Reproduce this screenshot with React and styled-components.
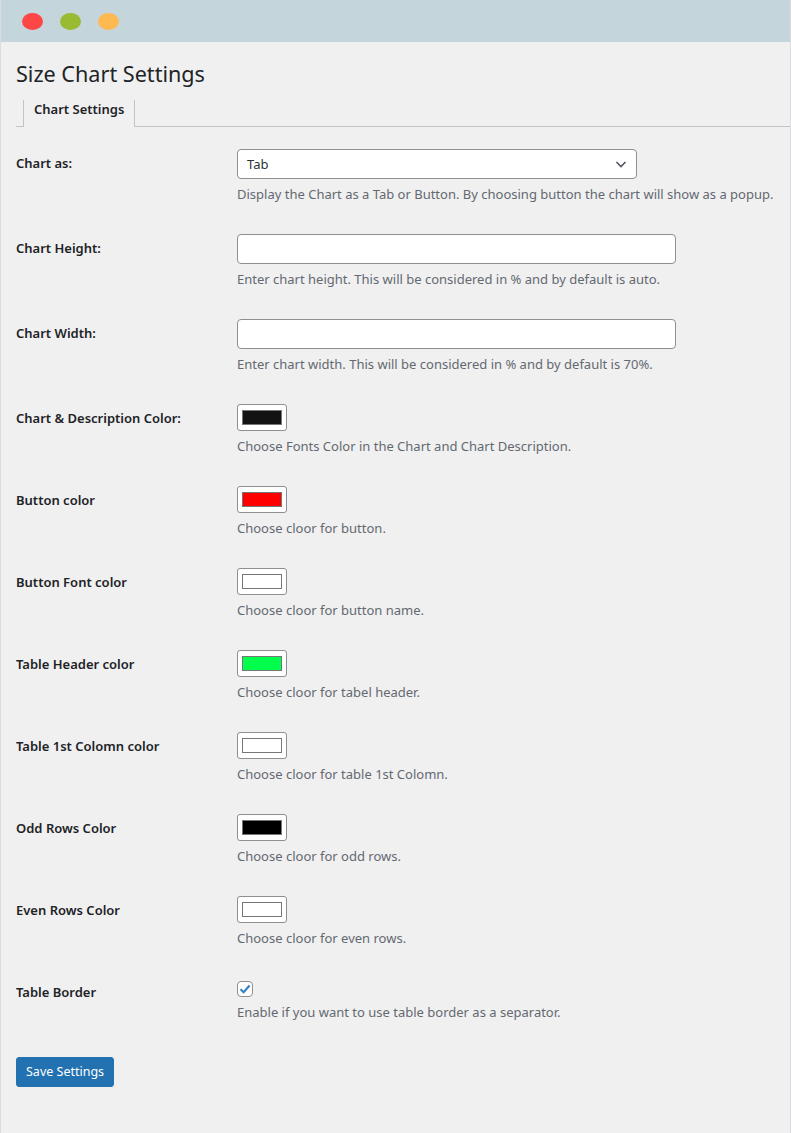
import React from "react";
import styled, { createGlobalStyle } from "styled-components";

const Global = createGlobalStyle`
  html, body { margin: 0; padding: 0; background: #f0f0f0; }
  body { font-family: "Noto Sans", "Open Sans", sans-serif; font-size: 13px; color: #3c434a; }
`;

const Window = styled.div`
  width: 791px;
  min-height: 1133px;
  background: #f0f0f0;
  box-sizing: border-box;
  border-left: 1px solid #dcdcde;
  border-right: 1px solid #dcdcde;
`;

const TitleBar = styled.div`
  height: 42px;
  background: #c4d5dc;
  display: flex;
  align-items: center;
  gap: 17px;
  padding-left: 21px;
  box-sizing: border-box;
`;

const Dot = styled.span`
  width: 21px;
  height: 17px;
  border-radius: 50%;
  background: ${(p) => p.$c};
  display: block;
`;

const Content = styled.div`
  padding: 0 0 0 15px;
`;

const Title = styled.h1`
  margin: 0;
  padding: 17px 0 0;
  font-size: 21.6px;
  font-weight: 400;
  line-height: 29px;
  color: #1d2327;
`;

const TabBar = styled.div`
  display: flex;
  margin-top: 12px;
  border-bottom: 1px solid #c3c4c7;
  padding-left: 7px;
  height: 26px;
`;

const Tab = styled.div`
  border: 1px solid #c3c4c7;
  border-bottom: none;
  border-top: none;
  padding: 0 10px;
  font-size: 13px;
  font-weight: 600;
  color: #1d2327;
  line-height: 19px;
  margin-bottom: -1px;
  background: #f0f0f0;
  height: 27px;
  box-sizing: border-box;
`;

const Form = styled.div`
  margin-top: 7px;
`;

const Row = styled.div`
  display: grid;
  grid-template-columns: 221px 1fr;
  padding: 15px 0;
`;

const Label = styled.div`
  font-size: 13px;
  font-weight: 600;
  color: #1d2327;
  line-height: 19px;
  margin-top: ${(p) => p.$offset}px;
`;

const Field = styled.div`
  display: flex;
  flex-direction: column;
  align-items: flex-start;
`;

const Desc = styled.div`
  margin-top: ${(p) => p.$gap ?? 6}px;
  font-size: 13px;
  line-height: 19px;
  color: #646970;
  white-space: nowrap;
`;

const SelectBox = styled.div`
  width: 400px;
  height: 30px;
  box-sizing: border-box;
  border: 1px solid #8c8f94;
  border-radius: 4px;
  background: #fff;
  display: flex;
  align-items: center;
  justify-content: space-between;
  padding: 0 8px 0 9px;
  color: #2c3338;
  font-size: 13px;
`;

const TextInput = styled.div`
  width: 439px;
  height: 30px;
  box-sizing: border-box;
  border: 1px solid #8c8f94;
  border-radius: 4px;
  background: #fff;
`;

const Swatch = styled.div`
  width: 50px;
  height: 27px;
  box-sizing: border-box;
  border: 1px solid #8c8f94;
  border-radius: 3px;
  background: #fff;
  display: flex;
  align-items: center;
  justify-content: center;
`;

const SwatchFill = styled.span`
  display: block;
  width: 40px;
  height: 15px;
  box-sizing: border-box;
  border: 1px solid #767676;
  background: ${(p) => p.$c};
`;

const CheckWrap = styled.div`
  height: 21px;
  display: flex;
  align-items: center;
`;

const CheckBox = styled.span`
  width: 16px;
  height: 16px;
  box-sizing: border-box;
  border: 1px solid #8c8f94;
  border-radius: 4px;
  background: #fff;
  display: flex;
  align-items: center;
  justify-content: center;
`;

const SaveButton = styled.button`
  margin-top: 20px;
  height: 30px;
  padding: 0 9px;
  background: #2271b1;
  border: 1px solid #2271b1;
  border-radius: 3px;
  color: #fff;
  font-family: inherit;
  font-size: 12.5px;
  line-height: 28px;
  cursor: pointer;
`;

const colorRows = [
  ["Chart & Description Color:", "#131313", "Choose Fonts Color in the Chart and Chart Description."],
  ["Button color", "#ff0000", "Choose cloor for button."],
  ["Button Font color", "#ffffff", "Choose cloor for button name."],
  ["Table Header color", "#00ff4c", "Choose cloor for tabel header."],
  ["Table 1st Colomn color", "#ffffff", "Choose cloor for table 1st Colomn."],
  ["Odd Rows Color", "#000000", "Choose cloor for odd rows."],
  ["Even Rows Color", "#ffffff", "Choose cloor for even rows."],
];

export default function App() {
  return (
    <>
      <Global />
      <Window>
        <TitleBar>
          <Dot $c="#fd4646" />
          <Dot $c="#98bb32" />
          <Dot $c="#ffb951" />
        </TitleBar>
        <Content>
          <Title>Size Chart Settings</Title>
          <TabBar>
            <Tab>Chart Settings</Tab>
          </TabBar>
          <Form>
            <Row>
              <Label $offset={5}>Chart as:</Label>
              <Field>
                <SelectBox>
                  <span>Tab</span>
                  <svg width="14" height="14" viewBox="0 0 14 14">
                    <path d="M2.5 5 L7 9.5 L11.5 5" fill="none" stroke="#50575e" strokeWidth="1.6" />
                  </svg>
                </SelectBox>
                <Desc>Display the Chart as a Tab or Button. By choosing button the chart will show as a popup.</Desc>
              </Field>
            </Row>
            <Row>
              <Label $offset={5}>Chart Height:</Label>
              <Field>
                <TextInput />
                <Desc>Enter chart height. This will be considered in % and by default is auto.</Desc>
              </Field>
            </Row>
            <Row>
              <Label $offset={5}>Chart Width:</Label>
              <Field>
                <TextInput />
                <Desc>Enter chart width. This will be considered in % and by default is 70%.</Desc>
              </Field>
            </Row>
            {colorRows.map(([label, c, desc]) => (
              <Row key={label}>
                <Label $offset={5}>{label}</Label>
                <Field>
                  <Swatch>
                    <SwatchFill $c={c} />
                  </Swatch>
                  <Desc>{desc}</Desc>
                </Field>
              </Row>
            ))}
            <Row>
              <Label $offset={5}>Table Border</Label>
              <Field>
                <CheckWrap>
                  <CheckBox>
                    <svg width="14" height="14" viewBox="0 0 14 14">
                      <path d="M2.5 7.2 L5.6 10.2 L11.6 3.4" fill="none" stroke="#3582c4" strokeWidth="2.2" />
                    </svg>
                  </CheckBox>
                </CheckWrap>
                <Desc $gap={4}>Enable if you want to use table border as a separator.</Desc>
              </Field>
            </Row>
          </Form>
          <SaveButton>Save Settings</SaveButton>
        </Content>
      </Window>
    </>
  );
}
